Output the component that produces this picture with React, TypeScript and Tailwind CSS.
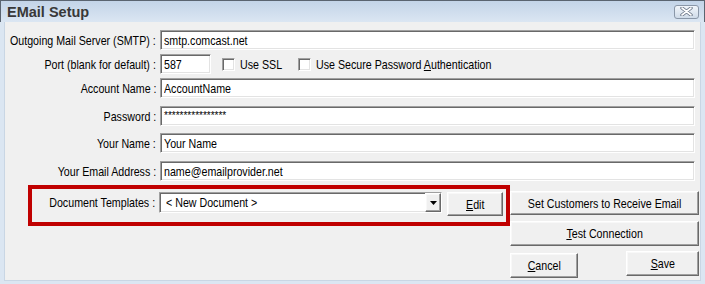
import React from "react";

const font = { fontFamily: '"Liberation Sans", Arial, sans-serif' };

const sunken =
  "bg-white border border-t-[#a0a0a0] border-l-[#a0a0a0] border-b-white border-r-white shadow-[inset_1px_1px_0_#696969,inset_-1px_-1px_0_#e3e3e3]";
const raised =
  "bg-[#f0f0f0] border border-t-white border-l-white border-b-[#696969] border-r-[#696969] shadow-[inset_-1px_-1px_0_#a0a0a0,inset_1px_1px_0_#f8f8f8] flex items-center justify-center text-black";

// narrow text, the dialog font is condensed
const N = ({ children, o = "origin-left" }: { children: React.ReactNode; o?: string }) => (
  <span className={`inline-block whitespace-nowrap scale-x-[0.82] ${o}`}>{children}</span>
);

const Field = ({ value, className = "" }: { value: string; className?: string }) => (
  <div className={`${sunken} h-[20px] flex items-center pl-[3px] text-black overflow-hidden ${className}`}>
    <N>{value}</N>
  </div>
);

const Row = ({ label, children, mt }: { label: string; children: React.ReactNode; mt: string }) => (
  <div className={`flex items-center pr-[5px] ${mt}`}>
    <div className="w-[152px] flex justify-end pr-[1px]">
      <N o="origin-right">{label}</N>
    </div>
    <div className="ml-[3px] flex-1 flex items-center">{children}</div>
  </div>
);

const Check = ({ children }: { children: React.ReactNode }) => (
  <div className="flex items-center">
    <div className={`${sunken} w-[13px] h-[13px] shrink-0`} />
    <div className="ml-[5px]">
      <N>{children}</N>
    </div>
  </div>
);

export default function App() {
  return (
    <div className="w-[705px] h-[284px] flex flex-col bg-[#dbe6f2] text-[13px] leading-none" style={font}>
      <div className="h-[22px] flex items-center justify-between border-t border-l border-r border-[#5a6470] bg-gradient-to-b from-[#c3d4e8] to-[#dbe6f2] pl-[6px] pr-[5px]">
        <span className="font-bold text-[14.5px] text-[#383838] pt-[1px]">EMail Setup</span>
        <div className="w-[25px] h-[14px] rounded-[3px] border border-[#8a97a8] bg-gradient-to-b from-[#f2f6fb] to-[#cfdbe8] flex items-center justify-center">
          <svg width="13" height="9" viewBox="0 0 13 9">
            <path d="M2 1 L11 8 M11 1 L2 8" stroke="#6b7687" strokeWidth="3.4" strokeLinecap="round" />
            <path d="M2 1 L11 8 M11 1 L2 8" stroke="#ffffff" strokeWidth="1.6" strokeLinecap="round" />
          </svg>
        </div>
      </div>
      <div className="flex-1 flex flex-col bg-[#f0f0f0] mx-[4px] mb-[3px] border-l border-r border-b border-[#c9d6e4]">
        <Row label="Outgoing Mail Server (SMTP) :" mt="mt-[8px]">
          <Field value="smtp.comcast.net" className="flex-1" />
        </Row>
        <Row label="Port (blank for default) :" mt="mt-[4px]">
          <Field value="587" className="w-[51px]" />
          <div className="ml-[11px]">
            <Check>Use SSL</Check>
          </div>
          <div className="ml-[7px]">
            <Check>
              Use Secure Password <span className="underline">A</span>uthentication
            </Check>
          </div>
        </Row>
        <Row label="Account Name :" mt="mt-[4px]">
          <Field value="AccountName" className="flex-1" />
        </Row>
        <Row label="Password :" mt="mt-[8px]">
          <div className={`${sunken} flex-1 h-[20px] flex items-center pl-[3px] text-[10px]`}>****************</div>
        </Row>
        <Row label="Your Name :" mt="mt-[7px]">
          <Field value="Your Name" className="flex-1" />
        </Row>
        <Row label="Your Email Address :" mt="mt-[8px]">
          <Field value="name@emailprovider.net" className="flex-1" />
        </Row>
        <div className="flex items-start mt-[4px]">
          <div className="ml-[23px] w-[482px] h-[41px] border-4 border-[#c00000] flex items-start pt-[3px]">
            <div className="w-[124px] pr-[1px] h-[21px] flex items-center justify-end">
              <N o="origin-right">Document Templates :</N>
            </div>
            <div className={`${sunken} ml-[3px] w-[283px] h-[21px] flex items-center pl-[6px]`}>
              <span className="flex-1">
                <N>&lt; New Document &gt;</N>
              </span>
              <div className={`${raised} w-[16px] h-[19px]`}>
                <svg width="7" height="4" viewBox="0 0 7 4">
                  <path d="M0 0 H7 L3.5 4 Z" fill="#000" />
                </svg>
              </div>
            </div>
            <div className={`${raised} ml-[5px] w-[56px] h-[24px]`}>
              <N o="origin-center">
                <span className="underline">E</span>dit
              </N>
            </div>
          </div>
          <div className="w-[189px] mt-[6px] flex flex-col">
            <div className={`${raised} h-[24px]`}>
              <N o="origin-center">Set Customers to Receive Email</N>
            </div>
            <div className={`${raised} h-[25px] mt-[6px]`}>
              <N o="origin-center">
                <span className="underline">T</span>est Connection
              </N>
            </div>
            <div className="flex justify-between items-start mt-[5px]">
              <div className={`${raised} w-[68px] h-[25px] mt-[2px]`}>
                <N o="origin-center">
                  <span className="underline">C</span>ancel
                </N>
              </div>
              <div className={`${raised} w-[73px] h-[25px]`}>
                <N o="origin-center">
                  <span className="underline">S</span>ave
                </N>
              </div>
            </div>
          </div>
        </div>
      </div>
    </div>
  );
}
